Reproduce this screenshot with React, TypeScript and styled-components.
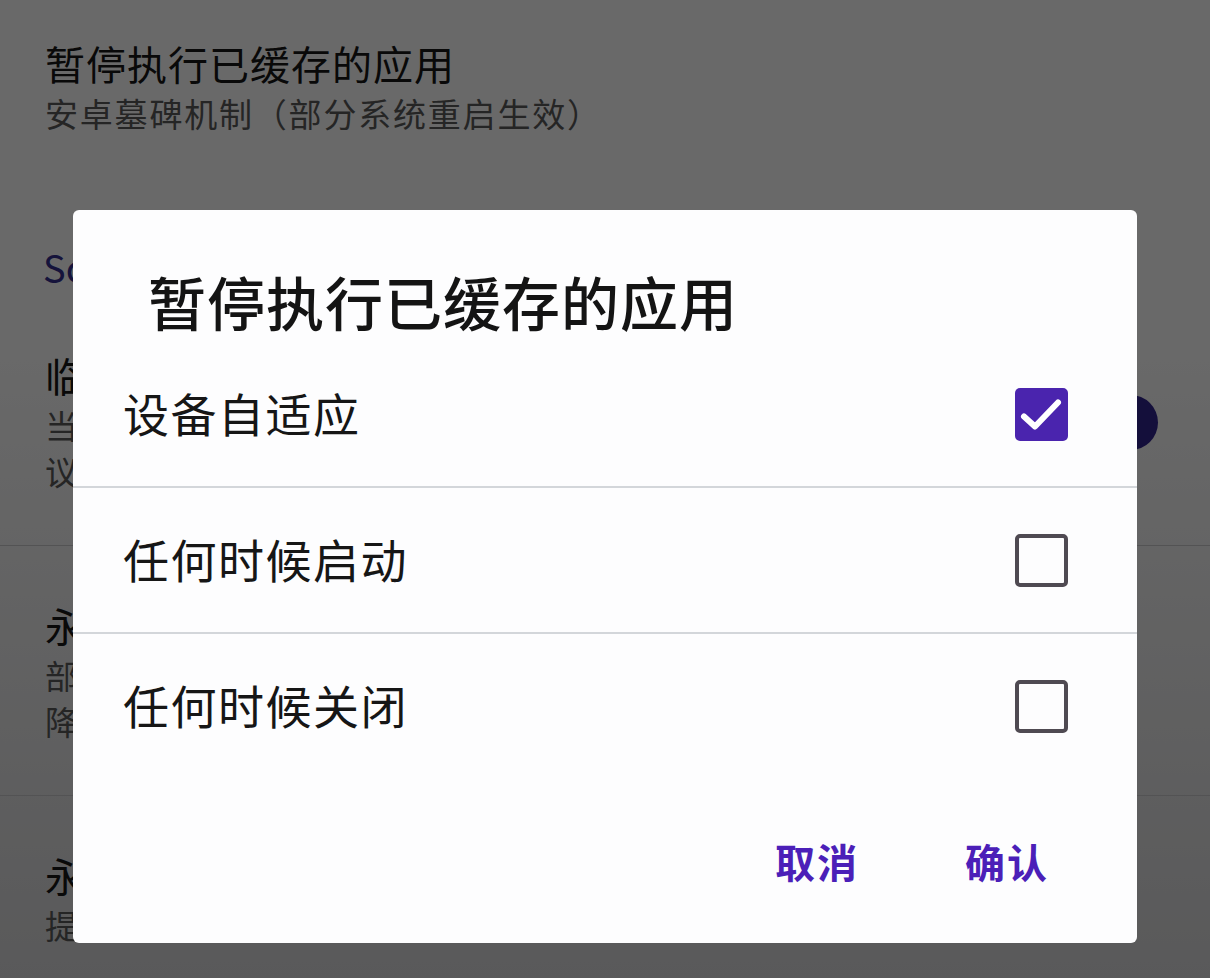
import React from 'react'
import styled, { createGlobalStyle } from 'styled-components'

const GlobalStyle = createGlobalStyle`
    html, body {
        margin: 0;
        padding: 0;
    }
    body {
        font-family: "Noto Sans CJK SC", "Noto Sans", sans-serif;
        background: #fff;
    }
`

const Page = styled.div`
    position: relative;
    width: 1210px;
    height: 978px;
    overflow: hidden;
    background: linear-gradient(to bottom, #ffffff 35%, #d9d9db 100%);
`

const SettingsList = styled.div`
    display: flex;
    flex-direction: column;
`

const Item = styled.div<{ $top?: number; $divider?: boolean }>`
    display: flex;
    flex-direction: row;
    align-items: center;
    justify-content: space-between;
    padding: ${(p) => p.$top ?? 55}px 53px 51px 45px;
    border-bottom: ${(p) => (p.$divider ? '1px solid #c9c9cc' : 'none')};
`

const ItemText = styled.div`
    display: flex;
    flex-direction: column;
`

const ItemTitle = styled.div`
    font-size: 40px;
    line-height: 48px;
    margin-bottom: 3px;
    color: #161616;
    letter-spacing: 1px;
`

const ItemSub = styled.div`
    font-size: 33px;
    line-height: 46px;
    color: #5a5a5a;
    letter-spacing: 1.8px;
`

const SectionHeader = styled.div`
    margin: 56px 0 5px 43px;
    font-size: 38px;
    line-height: 48px;
    color: #33308f;
`

const SwitchTrack = styled.div`
    display: flex;
    align-items: center;
    justify-content: flex-end;
    width: 96px;
    height: 38px;
    border-radius: 19px;
    background: #8c82e0;
`

const SwitchThumb = styled.div`
    width: 55px;
    height: 55px;
    border-radius: 50%;
    background: #31258f;
    margin-right: -1px;
`

const Scrim = styled.div`
    position: absolute;
    inset: 0;
    background: rgba(0, 0, 0, 0.59);
    display: flex;
    flex-direction: column;
    align-items: center;
    padding-top: 210px;
`

const Dialog = styled.div`
    width: 1064px;
    height: 733px;
    background: #fdfdfe;
    border-radius: 6px;
    display: flex;
    flex-direction: column;
    overflow: hidden;
`

const DialogTitle = styled.div`
    padding: 55px 0 5px 75px;
    font-size: 58px;
    line-height: 72px;
    font-weight: 500;
    color: #141414;
    letter-spacing: 1px;
`

const OptionRow = styled.div<{ $divider?: boolean }>`
    height: 144px;
    display: flex;
    align-items: center;
    justify-content: space-between;
    padding: 0 69px 0 50px;
    border-top: ${(p) => (p.$divider ? '2px solid #d3d6da' : 'none')};
`

const OptionLabel = styled.div`
    font-size: 46px;
    line-height: 60px;
    margin-top: -4px;
    color: #161616;
    letter-spacing: 1.5px;
`

const Box = styled.div<{ $checked?: boolean }>`
    box-sizing: border-box;
    width: 53px;
    height: 53px;
    border-radius: 5px;
    display: flex;
    align-items: center;
    justify-content: center;
    background: ${(p) => (p.$checked ? '#4a24ae' : 'transparent')};
    border: ${(p) => (p.$checked ? 'none' : '4px solid #4f4a52')};
`

const Footer = styled.div`
    flex: 1;
    display: flex;
    align-items: center;
    justify-content: flex-end;
    gap: 106px;
    padding-right: 88px;
`

const ActionButton = styled.button`
    border: none;
    background: none;
    padding: 0;
    font-family: inherit;
    font-size: 40px;
    font-weight: 700;
    letter-spacing: 2px;
    color: #4b1fb8;
`

function Checkbox({ checked }: { checked?: boolean }) {
    return (
        <Box $checked={checked}>
            {checked && (
                <svg width="53" height="53" viewBox="0 0 53 53" fill="none">
                    <path d="M9 28.5L20 38.5L43 14.5" stroke="#fff" strokeWidth="6" strokeLinecap="round" strokeLinejoin="round" />
                </svg>
            )}
        </Box>
    )
}

const options = [
    { label: '设备自适应', checked: true },
    { label: '任何时候启动', checked: false },
    { label: '任何时候关闭', checked: false },
]

function App() {
    return (
        <Page>
            <GlobalStyle />
            <SettingsList>
                <Item $top={39}>
                    <ItemText>
                        <ItemTitle>暂停执行已缓存的应用</ItemTitle>
                        <ItemSub>安卓墓碑机制（部分系统重启生效）</ItemSub>
                    </ItemText>
                </Item>
                <SectionHeader>Scene</SectionHeader>
                <Item $divider>
                    <ItemText>
                        <ItemTitle>临时关闭后台冻结</ItemTitle>
                        <ItemSub>当应用出现异常时可尝试关闭</ItemSub>
                        <ItemSub>议在排查问题后重新开启</ItemSub>
                    </ItemText>
                    <SwitchTrack>
                        <SwitchThumb />
                    </SwitchTrack>
                </Item>
                <Item $divider>
                    <ItemText>
                        <ItemTitle>永久保留后台应用</ItemTitle>
                        <ItemSub>部分应用可能因此耗电增加</ItemSub>
                        <ItemSub>降低系统流畅度</ItemSub>
                    </ItemText>
                </Item>
                <Item>
                    <ItemText>
                        <ItemTitle>永久关闭系统优化</ItemTitle>
                        <ItemSub>提示：需要重启后生效</ItemSub>
                    </ItemText>
                </Item>
            </SettingsList>
            <Scrim>
                <Dialog>
                    <DialogTitle>暂停执行已缓存的应用</DialogTitle>
                    {options.map((o, i) => (
                        <OptionRow key={o.label} $divider={i > 0}>
                            <OptionLabel>{o.label}</OptionLabel>
                            <Checkbox checked={o.checked} />
                        </OptionRow>
                    ))}
                    <Footer>
                        <ActionButton>取消</ActionButton>
                        <ActionButton>确认</ActionButton>
                    </Footer>
                </Dialog>
            </Scrim>
        </Page>
    )
}

export default App
